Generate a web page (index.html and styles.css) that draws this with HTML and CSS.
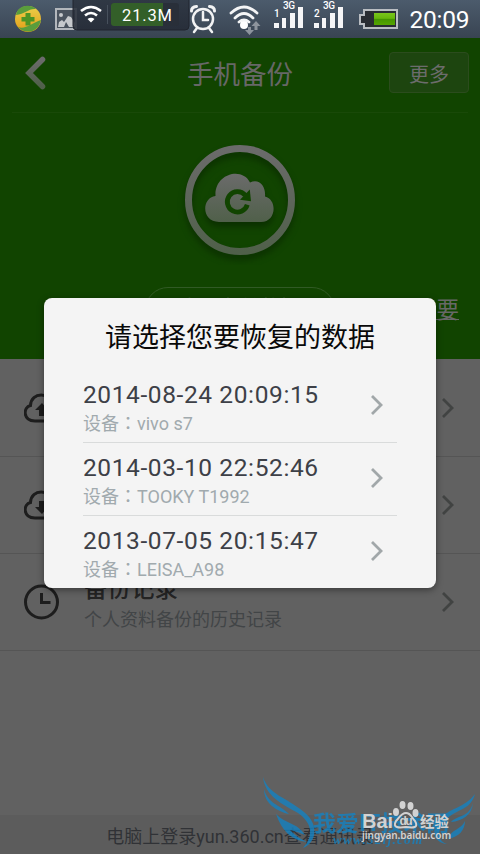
FILE: index.html
```html
<!DOCTYPE html>
<html lang="zh-CN">
<head>
<meta charset="utf-8">
<title>手机备份</title>
<link rel="stylesheet" href="styles.css">
</head>
<body>
<div class="phone">
  <div class="status">
    <svg class="status-icons" width="480" height="38" viewBox="0 0 480 38">
      <defs>
        <linearGradient id="ball" x1="0" y1="0" x2="0" y2="1"><stop offset="0" stop-color="#ecd04b"/><stop offset="1" stop-color="#e39d17"/></linearGradient>
        <linearGradient id="cell" x1="0" y1="0" x2="0" y2="1"><stop offset="0" stop-color="#79c51b"/><stop offset=".45" stop-color="#67b70c"/><stop offset=".5" stop-color="#449500"/><stop offset="1" stop-color="#55a500"/></linearGradient>
        <linearGradient id="pill" x1="0" y1="0" x2="0" y2="1"><stop offset="0" stop-color="#2d3541"/><stop offset="1" stop-color="#252b36"/></linearGradient>
      </defs>
      <circle cx="28" cy="19" r="13" fill="url(#ball)"/>
      <path d="M16 15C18 4 31 4 36 9C29 8 25 14 16 15ZM18 27C25 30 32 23 41 20C38 34 24 34 18 27Z" fill="#5a9d3c"/>
      <path d="M25.500 13h5v4h4v4.500h-4v4h-5v-4h-4v-4.500h4z" fill="#4d9424"/>
      <rect x="56" y="9" width="20" height="20" fill="#4a535e" stroke="#b3b7bc" stroke-width="2"/>
      <circle cx="61" cy="15" r="2" fill="#c6c9cc"/>
      <path d="M58 27l1-5 3-2 2 2 4-6 3 1 4 6v4h-6l-3-5-2 5z" fill="#c6c9cc"/>
      <rect x="73" y="-5" width="116" height="35" rx="4" fill="url(#pill)" fill-opacity=".88" stroke="#20252e"/>
      <path d="M107.500 5v19" stroke="#47505c"/>
      <rect x="111" y="3" width="68" height="23" rx="3" fill="#292f39"/>
      <path d="M114 3h49v23h-49q-3 0-3-3v-17q0-3 3-3z" fill="#335f29"/>
      <path d="M81 11Q91 3 101 11M85 15.500Q91 10.500 97 15.500" fill="none" stroke="#fff" stroke-width="2.600"/>
      <path d="M87.500 19Q91 16.500 94.500 19L91 22.500z" fill="#fff"/>
      <g fill="none" stroke="#f2f3f4" stroke-width="2.500" stroke-linecap="round">
        <circle cx="203" cy="19" r="10"/>
        <path d="M203 12v8h5M197 28l-3 4M209 28l3 4"/>
        <path d="M191.500 11q0-4 5-4.500M214.500 11q0-4-5-4.500" stroke-width="3"/>
      </g>
      <path d="M231 13Q244 1 257 13M235 18Q244 9 253 18M239 22Q244 18 249 22" fill="none" stroke="#f4f5f6" stroke-width="2.800" stroke-linecap="round"/>
      <circle cx="244" cy="25" r="4" fill="#fff"/>
      <path d="M248 27h3v3h3l-4.500 5-4.500-5h3zM254.500 30v-4h-3l4.500-5 4.500 5h-3v4z" fill="#8d949d"/>
      <g fill="#f5f5f6">
        <path d="M274 23h5v5h-5zM282 18h4v10h-4zM290 13h5v15h-5zM298 7h5v21h-5z"/>
        <path d="M314 23h5v5h-5zM322 18h4v10h-4zM330 13h5v15h-5zM338 7h5v21h-5z"/>
      </g>
      <path d="M364 10h33v18h-33v-4h-4v-9h4z" fill="#292d33" stroke="#b9bdc2" stroke-width="2"/>
      <rect x="374" y="13" width="21" height="12" fill="url(#cell)"/>
      <g class="signal-text">
        <text x="283" y="9" textLength="12">3G</text><text x="323" y="9" textLength="12">3G</text>
        <text x="274" y="17">1</text><text x="314" y="17">2</text>
      </g>
      <text class="memory" x="122" y="21" textLength="50">21.3M</text>
      <text class="time" x="409.500" y="28" textLength="60">20:09</text>
    </svg>
  </div>

  <header class="hero">
    <div class="navbar">
      <svg class="back" width="24" height="38" viewBox="0 0 24 38">
        <defs><linearGradient id="metal" x1="0" y1="0" x2="0" y2="1"><stop offset="0" stop-color="#6b6b6b"/><stop offset="1" stop-color="#50604a"/></linearGradient></defs>
        <path d="M19.500 3.500L6 17L19.500 30.500" fill="none" stroke="url(#metal)" stroke-width="5.500" stroke-linecap="round"/>
      </svg>
      <h1>手机备份</h1>
      <div class="more">更多</div>
    </div>
    <svg class="cloud-ring" width="130" height="130" viewBox="0 0 130 130">
      <g class="raised">
        <circle cx="65" cy="65" r="51.500" fill="none" stroke="url(#metal)" stroke-width="7"/>
        <path d="M44 87C26.500 87 26 63 40.500 61C39 39 67 31 75 47.500C84 43 91 51 90 61.500C103 65 101 87 86 87Z" fill="url(#metal)"/>
      </g>
      <path d="M70.200 60.100A10.200 10.200 0 1 0 72.300 69.800" fill="none" stroke="#114400" stroke-width="4.800"/>
      <path d="M74.800 54.500L76 66.300L65 64.800Z" fill="#114400"/>
    </svg>
    <div class="backup-pill">立即备份数据</div>
    <div class="notice">重要</div>
  </header>

  <main class="menu">
    <div class="menu-row">
      <svg class="menu-icon" width="36" height="36" viewBox="0 0 36 36"><path d="M11 31C-1.500 31 -1 17 6.500 15.500C7 1.500 27 1.500 29 15.500C37 17 36 31 27 31Z" class="outline"/><path d="M18 13l6 7h-4v6h-5v-6h-4z" fill="#1d1d1d"/></svg>
      <div class="menu-copy"><b>备份到云端</b><span>备份手机中的资料</span></div>
      <svg class="arrow" width="14" height="22" viewBox="0 0 14 22"><path d="M2 2l9 9-9 9"/></svg>
    </div>
    <div class="menu-row">
      <svg class="menu-icon" width="36" height="36" viewBox="0 0 36 36"><path d="M11 31C-1.500 31 -1 17 6.500 15.500C7 1.500 27 1.500 29 15.500C37 17 36 31 27 31Z" class="outline"/><path d="M18 27l6-7h-4v-6h-5v6h-4z" fill="#1d1d1d"/></svg>
      <div class="menu-copy"><b>恢复到手机</b><span>恢复云端的资料</span></div>
      <svg class="arrow" width="14" height="22" viewBox="0 0 14 22"><path d="M2 2l9 9-9 9"/></svg>
    </div>
    <div class="menu-row">
      <svg class="menu-icon" width="36" height="36" viewBox="0 0 36 36"><circle cx="17.500" cy="18" r="16" class="outline"/><path d="M17.500 9v9.500h9" fill="none" stroke="#1d1d1d" stroke-width="3"/></svg>
      <div class="menu-copy"><b>备份记录</b><span>个人资料备份的历史记录</span></div>
      <svg class="arrow" width="14" height="22" viewBox="0 0 14 22"><path d="M2 2l9 9-9 9"/></svg>
    </div>
  </main>
  <footer>电脑上登录yun.360.cn查看通讯录</footer>

  <section class="dialog">
    <h2>请选择您要恢复的数据</h2>
    <div class="record">
      <div><div class="date">2014-08-24 20:09:15</div><div class="device" lang="zh-TW">设备：vivo s7</div></div>
      <svg class="arrow" width="14" height="22" viewBox="0 0 14 22"><path d="M2 2l9 9-9 9"/></svg>
    </div>
    <div class="record">
      <div><div class="date">2014-03-10 22:52:46</div><div class="device" lang="zh-TW">设备：TOOKY T1992</div></div>
      <svg class="arrow" width="14" height="22" viewBox="0 0 14 22"><path d="M2 2l9 9-9 9"/></svg>
    </div>
    <div class="record">
      <div><div class="date">2013-07-05 20:15:47</div><div class="device" lang="zh-TW">设备：LEISA_A98</div></div>
      <svg class="arrow" width="14" height="22" viewBox="0 0 14 22"><path d="M2 2l9 9-9 9"/></svg>
    </div>
  </section>

  <svg class="watermark" width="230" height="89" viewBox="0 0 230 89">
    <g class="wings">
      <path d="M13 12C19 30 36 32 54 47C70 60 66 78 53 83C65 70 61 57 48 48C32 39 15 31 13 12Z"/>
      <path d="M14 24C18 39 29 39 39 49C26 46 14 38 14 24Z"/>
      <path d="M26 49C34 58 48 58 55 70C46 66 40 65 40 65Q46 72 57 77C41 75 32 66 26 49Z"/>
      <path d="M225 29C220 47 205 43 194 57C185 69 190 77 197 79C184 78 181 65 188 56C199 42 214 44 225 29Z"/>
      <path d="M223 38C219 53 207 50 201 57C212 56 222 50 223 38ZM215 56C211 65 201 64 198 74C209 72 215 65 215 56Z"/>
    </g>
    <g class="site">
      <text x="63" y="66" class="site-name" textLength="136" lengthAdjust="spacingAndGlyphs">我爱IT技术网</text>
      <text x="83" y="79" class="site-url" textLength="89">www.52ij.com</text>
    </g>
    <g class="baidu">
      <ellipse cx="146" cy="47" rx="3" ry="4"/><ellipse cx="152.500" cy="40" rx="3" ry="4"/><ellipse cx="160.500" cy="41" rx="3" ry="4"/><ellipse cx="165.500" cy="48" rx="3" ry="4"/>
      <path d="M156 48C151 48 149 53 146 56C142 63 149 63 156 62C163 63 169 63 165 56C161 52 161 48 156 48Z" fill="none" stroke="#d2d2d2" stroke-width="2"/>
      <text x="149.500" y="60" class="paw-text" textLength="13">du</text>
      <text x="112" y="63" class="brand" textLength="31" lengthAdjust="spacingAndGlyphs">Bai</text>
      <text x="170" y="62" class="brand-cn" textLength="29" lengthAdjust="spacingAndGlyphs">经验</text>
      <text x="112" y="74" class="baidu-url" textLength="89">jingyan.baidu.com</text>
    </g>
  </svg>
</div>
</body>
</html>
```
FILE: styles.css
```css
* { box-sizing: border-box; }
body { margin: 0; font-family: Roboto, "Noto Sans CJK SC", sans-serif; }
.phone { position: relative; width: 480px; height: 854px; overflow: hidden; background: #616161; display: flex; flex-direction: column; }
.status { height: 38px; flex: none; background: linear-gradient(#4c5b6c, #394452); }
.status-icons { display: block; }
.status text { fill: #fff; }
.signal-text text { font-size: 10px; font-weight: 500; }
.memory { font-size: 16.5px; }
.time { font-size: 24.5px; }
.hero { height: 321px; flex: none; background: #114400; display: flex; flex-direction: column; align-items: center; position: relative; }
.navbar { width: 456px; height: 75px; flex: none; display: grid; grid-template-columns: 80px 1fr 80px; align-items: center; border-bottom: 1px solid #194908; }
.back { margin-left: 11px; }
h1 { margin: -1px 0 0; font-size: 26.5px; line-height: 36px; font-weight: 400; color: #676767; text-align: center; }
.more { width: 80px; height: 41px; margin: -5px 0 0 1px; border: 1px solid #2b4c1d; border-radius: 4px; background: #1d450f; color: #6c6c6c; font-size: 20px; line-height: 45px; text-align: center; }
.cloud-ring { margin-top: 22px; flex: none; }
.raised { filter: drop-shadow(0 5px 3px #0b3000); }
.backup-pill { margin-top: 22px; width: 190px; height: 46px; flex: none; border: 1px solid #315a25; border-radius: 23px; color: #355b29; font-size: 20px; line-height: 40px; text-align: center; }
.notice { align-self: flex-end; margin: -39px 21px 0 0; font-size: 22.5px; line-height: 33px; color: #686868; text-decoration: underline; text-decoration-thickness: 1px; text-underline-offset: 1px; }
.menu { flex: none; }
.menu-row { height: 97px; border-bottom: 1px solid #555; display: grid; grid-template-columns: 84px 1fr 39px; align-items: center; }
.menu-row:first-child { height: 98px; }
.menu-icon { margin-left: 24px; }
.outline { fill: none; stroke: #1d1d1d; stroke-width: 3; }
.menu-copy { display: flex; flex-direction: column; padding-top: 2px; }
.menu-copy b { font-size: 23.5px; line-height: 34px; color: #242424; font-weight: 500; }
.menu-copy span { font-size: 18px; line-height: 28px; color: #424547; }
.arrow { fill: none; stroke: #414342; stroke-width: 2.8; }
footer { margin-top: auto; height: 39px; background: #5c5c5c; color: #303236; font-size: 18px; line-height: 43px; text-align: center; white-space: nowrap; }
.dialog { position: absolute; left: 44px; top: 298px; width: 392px; height: 290px; border-radius: 8px; overflow: hidden; padding: 0 39px; background: #f4f4f4; box-shadow: 0 2px 7px rgba(0,0,0,.42); }
h2 { margin: 0; height: 72px; font-size: 27px; line-height: 81px; color: #090909; font-weight: 400; text-align: center; }
.record { height: 73px; border-bottom: 1px solid #d9dbdb; display: flex; justify-content: space-between; padding: 9px 13px 0 0; }
.record:last-child { border-bottom: 0; }
.record .arrow { stroke: #a1a7a9; margin-top: 15px; }
.date { height: 31px; font-size: 24.5px; line-height: 31px; color: #3d4047; letter-spacing: .6px; white-space: nowrap; }
.device { font-family: Roboto, "Noto Sans CJK TC", sans-serif; font-size: 18px; line-height: 28px; color: #a1aaae; white-space: nowrap; }
.watermark { position: absolute; left: 250px; top: 765px; }
.baidu { fill: #d2d2d2; }
.brand { font: 700 21px "Liberation Sans", sans-serif; }
.brand-cn { font: 700 15px "Noto Sans CJK SC", sans-serif; }
.paw-text { font: 700 12px "Liberation Sans", sans-serif; }
.baidu-url { font: 600 10px "Noto Sans", sans-serif; }
.wings, .site { fill: #1681bf; opacity: .82; }
.site-name { font: 700 22px "Noto Sans CJK SC", sans-serif; }
.site-url { font: italic 700 13px "Liberation Serif", serif; }
```
